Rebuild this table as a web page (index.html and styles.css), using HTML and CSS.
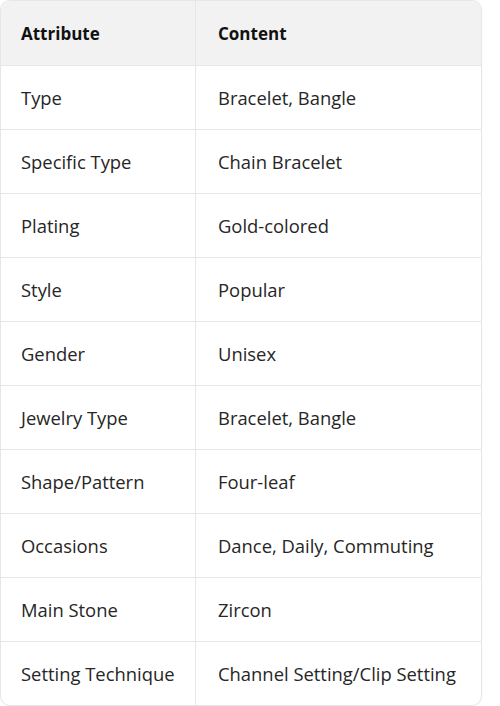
FILE: index.html
```html
<!DOCTYPE html>
<html>
<head>
<meta charset="utf-8">
<link rel="stylesheet" href="styles.css">
</head>
<body>
<div class="wrap">
<table class="spec">
<thead>
<tr><th>Attribute</th><th>Content</th></tr>
</thead>
<tbody>
<tr><td>Type</td><td>Bracelet, Bangle</td></tr>
<tr><td>Specific Type</td><td>Chain Bracelet</td></tr>
<tr><td>Plating</td><td>Gold-colored</td></tr>
<tr><td>Style</td><td>Popular</td></tr>
<tr><td>Gender</td><td>Unisex</td></tr>
<tr><td>Jewelry Type</td><td>Bracelet, Bangle</td></tr>
<tr><td>Shape/Pattern</td><td>Four-leaf</td></tr>
<tr><td>Occasions</td><td>Dance, Daily, Commuting</td></tr>
<tr><td>Main Stone</td><td>Zircon</td></tr>
<tr><td>Setting Technique</td><td>Channel Setting/Clip Setting</td></tr>
</tbody>
</table>
</div>
</body>
</html>
```

FILE: styles.css
```css
html, body {
  margin: 0;
  padding: 0;
  background: #ffffff;
}
.wrap {
  width: 482px;
  height: 706px;
  border: 1px solid #e6e6e6;
  border-radius: 10px;
  overflow: hidden;
  box-sizing: border-box;
  box-shadow: 0 0 2px rgba(0,0,0,0.06);
}
.spec {
  width: 100%;
  border-collapse: collapse;
  font-family: "Open Sans", "Liberation Sans", sans-serif;
  font-size: 18.4px;
  color: #262626;
}
.spec th, .spec td {
  text-align: left;
  padding: 0 0 0 20px;
  border-bottom: 1px solid #e6e6e6;
  white-space: nowrap;
}
.spec th:first-child, .spec td:first-child {
  width: 174px;
  border-right: 1px solid #e6e6e6;
}
.spec th + th, .spec td + td {
  padding-left: 22px;
}
.spec th {
  height: 64px;
  background: #f2f2f2;
  font-weight: 700;
  font-size: 17px;
  color: #111;
}
.spec td {
  height: 63px;
}
.spec tbody tr:last-child td {
  border-bottom: none;
}
```
